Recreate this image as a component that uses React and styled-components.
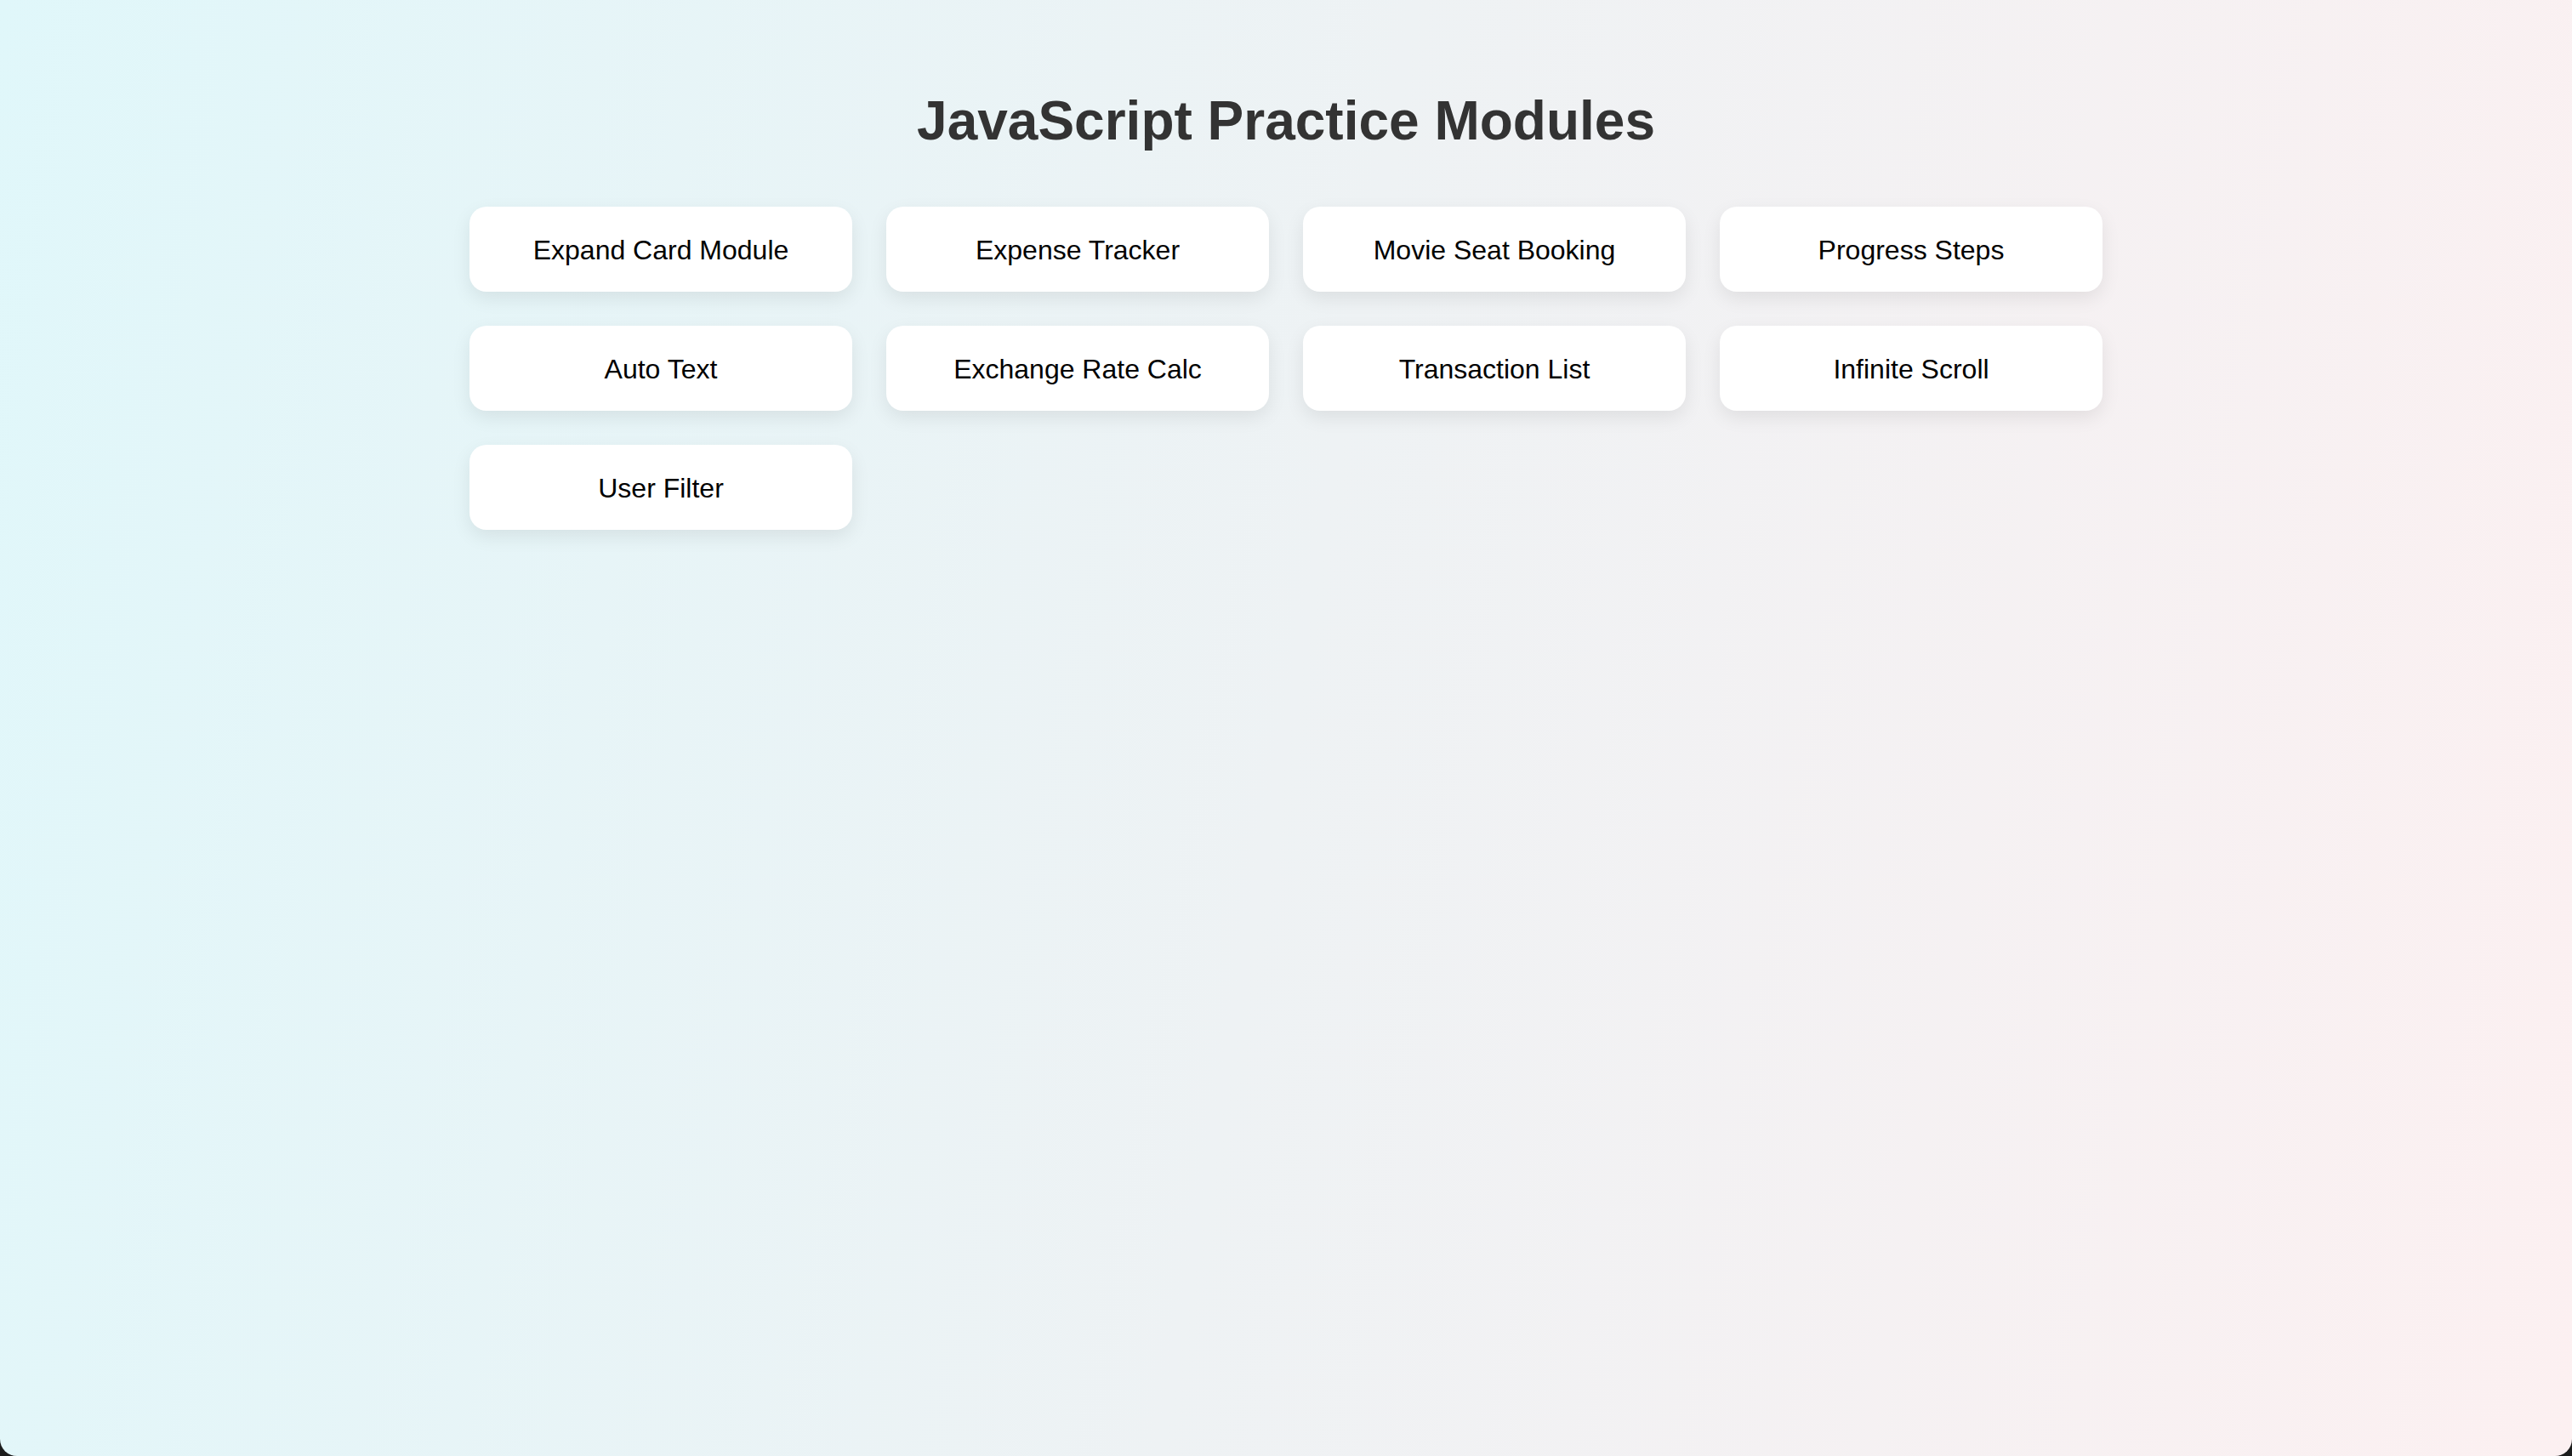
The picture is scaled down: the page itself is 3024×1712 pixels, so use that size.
import React from 'react';
import styled, { createGlobalStyle } from 'styled-components';

const GlobalStyle = createGlobalStyle`
  * {
    box-sizing: border-box;
  }

  html,
  body {
    margin: 0;
    padding: 0;
    background: #1c1c1c;
    font-family: 'Liberation Sans', Arial, Helvetica, sans-serif;
  }
`;

const Page = styled.div`
  min-height: 100vh;
  padding: 106px 0 80px;
  background: linear-gradient(100deg, #e0f7fa 0%, #eef2f4 50%, #fcf0f1 100%);
  border-radius: 0 0 20px 20px;
  overflow: hidden;
`;

const Title = styled.h1`
  margin: 0 0 63px;
  text-align: center;
  font-size: 64px;
  line-height: 1.15;
  font-weight: 700;
  color: #333;
`;

const ModuleGrid = styled.div`
  display: grid;
  grid-template-columns: repeat(4, 450px);
  gap: 40px;
  justify-content: center;
`;

const ModuleCard = styled.a`
  display: flex;
  align-items: center;
  justify-content: center;
  height: 100px;
  padding-top: 3px;
  background: #fff;
  border-radius: 20px;
  box-shadow: 0 8px 22px rgba(0, 0, 0, 0.08);
  color: #000;
  font-size: 32px;
  text-decoration: none;
  cursor: pointer;
`;

const modules = [
  'Expand Card Module',
  'Expense Tracker',
  'Movie Seat Booking',
  'Progress Steps',
  'Auto Text',
  'Exchange Rate Calc',
  'Transaction List',
  'Infinite Scroll',
  'User Filter',
];

function App() {
  return (
    <>
      <GlobalStyle />
      <Page>
        <Title>JavaScript Practice Modules</Title>
        <ModuleGrid>
          {modules.map((name) => (
            <ModuleCard key={name}>{name}</ModuleCard>
          ))}
        </ModuleGrid>
      </Page>
    </>
  );
}

export default App;
